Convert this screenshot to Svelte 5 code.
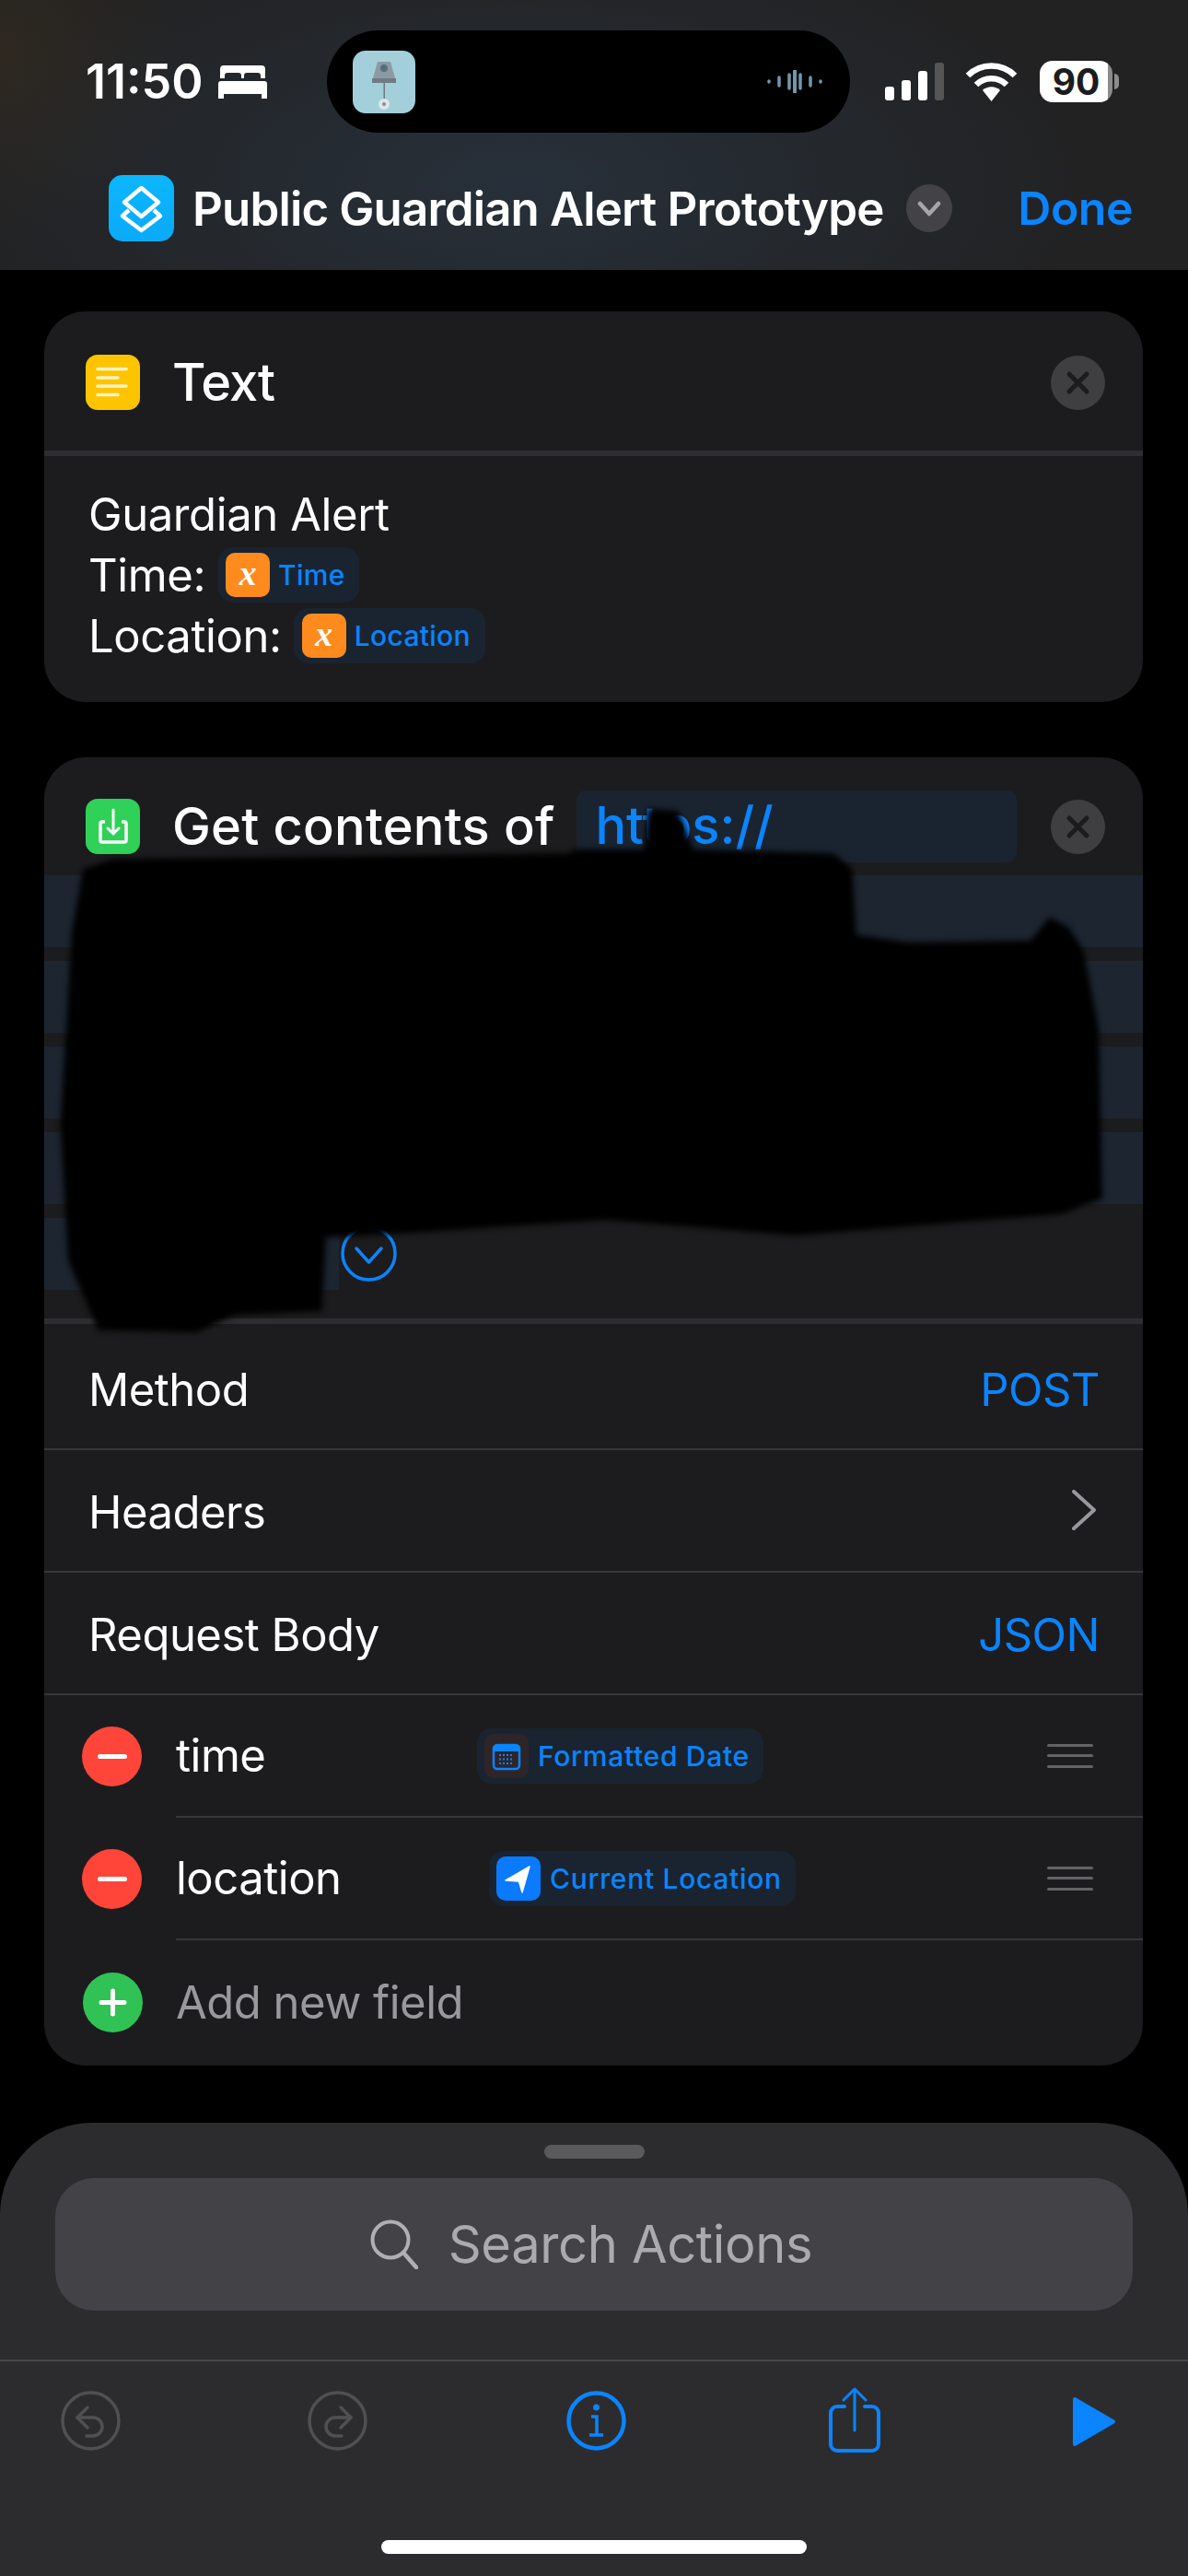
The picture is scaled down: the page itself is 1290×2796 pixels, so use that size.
<script>
  const stripes = [0, 1, 2, 3, 4];
  const fields = [
    { name: 'time', pill: 'Formatted Date', kind: 'date', offset: 327 },
    { name: 'location', pill: 'Current Location', kind: 'loc', offset: 340 }
  ];
</script>

<div class="page">
  <header class="header">
    <div class="status">
      <span class="time">11:50</span>
      <svg class="bed" viewBox="0 0 53 36" width="53" height="36" aria-hidden="true">
        <path fill="#fff" d="M6 0h41a4 4 0 0 1 4 4v10h-5v-3a3 3 0 0 0-3-3H31a3 3 0 0 0-3 3v3h-3v-3a3 3 0 0 0-3-3H10a3 3 0 0 0-3 3v3H2V4a4 4 0 0 1 4-4z"/>
        <path fill="#fff" d="M3 17h47a3 3 0 0 1 3 3v11H0V20a3 3 0 0 1 3-3z"/>
        <rect fill="#fff" x="0" y="31" width="6" height="5"/><rect fill="#fff" x="47" y="31" width="6" height="5"/>
      </svg>
      <div class="island">
        <div class="thumb">
          <svg viewBox="0 0 68 68" width="68" height="68" aria-hidden="true">
            <path fill="#8b9aa3" d="M27 12h14l5 18H22z"/><circle cx="34" cy="19" r="4" fill="#54707f"/>
            <rect x="21" y="30" width="26" height="5" fill="#6d7b84"/>
            <rect x="33.5" y="35" width="1.5" height="20" fill="#6d7b84"/>
            <circle cx="34" cy="58" r="6" fill="#dfe6e8"/><circle cx="34" cy="58" r="2" fill="#7d8d96"/>
          </svg>
        </div>
        <svg class="wave" viewBox="0 0 60 25" width="60" height="25" aria-hidden="true">
          <g stroke="#6f98a8" stroke-width="3.5" stroke-linecap="round">
            <path d="M2 12v1M13 8v9M24 5v15"/><path d="M30 1v23" stroke-width="4"/><path d="M36 5v15M47 8v9M58 12v1"/>
          </g>
        </svg>
      </div>
      <svg class="signal" viewBox="0 0 65 41" width="65" height="41" aria-hidden="true">
        <rect x="0" y="26" width="10" height="15" rx="3" fill="#fff"/>
        <rect x="18" y="19" width="10" height="22" rx="3" fill="#fff"/>
        <rect x="36" y="9" width="10" height="32" rx="3" fill="#fff"/>
        <rect x="54" y="0" width="10" height="41" rx="3" fill="#555"/>
      </svg>
      <svg class="wifi" viewBox="0 0 57 42" width="57" height="42" aria-hidden="true">
        <g fill="none" stroke="#fff" stroke-width="6.5">
          <path d="M3 14C17 0 40 0 54 14"/><path d="M12 24c9-9 24-9 33 0"/>
        </g>
        <path fill="#fff" d="M19 30c5-5 14-5 19 0L28.500 42z"/>
      </svg>
      <div class="battery"><span>90</span></div>
    </div>
    <div class="nav">
      <div class="app-icon">
        <svg viewBox="0 0 71 72" width="71" height="72" aria-hidden="true">
          <g fill="none" stroke="#fff" stroke-width="4.500" stroke-linejoin="round">
            <path d="M22 38 15 44.500 35.500 60 56 44.500 49 38"/>
            <path d="M35.500 14 54 29.500 35.500 45 17 29.500z"/>
          </g>
        </svg>
      </div>
      <span class="nav-title">Public Guardian Alert Prototype</span>
      <span class="nav-chev">
        <svg viewBox="0 0 50 52" width="50" height="52" aria-hidden="true"><path d="M15 21l10 11 10-11" fill="none" stroke="#a5a5aa" stroke-width="4.500" stroke-linecap="round" stroke-linejoin="round"/></svg>
      </span>
      <span class="done">Done</span>
    </div>
  </header>

  <main class="main">
    <section class="card card-text">
      <div class="card-head">
        <div class="act-icon yellow">
          <svg viewBox="0 0 59 60" width="59" height="60" aria-hidden="true">
            <g stroke="#fff4c4" stroke-width="3.500" stroke-linecap="round">
              <path d="M13 15.500h31M13 25h22M13 34h31M13 43.500h22"/>
            </g>
          </svg>
        </div>
        <span class="card-title">Text</span>
        <span class="close">
          <svg viewBox="0 0 59 59" width="59" height="59" aria-hidden="true"><path d="M20 20l19 19M39 20 20 39" stroke="#1c1c1e" stroke-width="5" stroke-linecap="round"/></svg>
        </span>
      </div>
      <div class="divider"></div>
      <div class="body">
        <div class="line">Guardian Alert</div>
        <div class="line">Time:<span class="pill p-time"><span class="var">x</span><span class="pill-text">Time</span></span></div>
        <div class="line">Location:<span class="pill p-loc"><span class="var">x</span><span class="pill-text">Location</span></span></div>
      </div>
    </section>

    <section class="card card-get">
      <div class="card-head head-get">
        <div class="act-icon green">
          <svg viewBox="0 0 59 60" width="59" height="60" aria-hidden="true">
            <path d="M21 25h-3a2 2 0 0 0-2 2v18a2 2 0 0 0 2 2h24a2 2 0 0 0 2-2V27a2 2 0 0 0-2-2h-3" fill="none" stroke="#fff" stroke-width="3.500" stroke-linejoin="round"/>
            <path d="M30 12v26M24 32l6 6 6-6" fill="none" stroke="#fff" stroke-width="3" stroke-linecap="round" stroke-linejoin="round"/>
          </svg>
        </div>
        <span class="card-title get-title">Get contents of</span>
        <div class="url"><span>https://</span></div>
        <span class="close">
          <svg viewBox="0 0 59 59" width="59" height="59" aria-hidden="true"><path d="M20 20l19 19M39 20 20 39" stroke="#1c1c1e" stroke-width="5" stroke-linecap="round"/></svg>
        </span>
      </div>
      <div class="stripes">
        {#each stripes as s}
          <div class="stripe" class:short={s === 4}>
            {#if s === 4}
              <svg class="expand" viewBox="0 0 61 61" width="61" height="61" aria-hidden="true">
                <circle cx="30.500" cy="30.500" r="28.500" fill="none" stroke="#0a84ff" stroke-width="3.500"/>
                <path d="M17 25l13.500 15L44 25" fill="none" stroke="#0a84ff" stroke-width="3.500" stroke-linecap="round" stroke-linejoin="round"/>
              </svg>
            {/if}
          </div>
        {/each}
      </div>
      <div class="divider div-get"></div>
      <div class="row"><span>Method</span><span class="val">POST</span></div>
      <div class="row"><span>Headers</span>
        <svg class="chev" viewBox="0 0 26 44" width="26" height="44" aria-hidden="true"><path d="M2 2l22 20L2 42" fill="none" stroke="#98989d" stroke-width="4" stroke-linecap="round" stroke-linejoin="round"/></svg>
      </div>
      <div class="row"><span>Request Body</span><span class="val">JSON</span></div>
      {#each fields as f}
        <div class="field">
          <span class="round red"><span class="minus"></span></span>
          <div class="field-main">
            <span class="field-name">{f.name}</span>
            <span class="pill field-pill" style="left: {f.offset}px">
              {#if f.kind === 'date'}
                <span class="pico date">
                  <svg viewBox="0 0 48 49" width="48" height="49" aria-hidden="true">
                    <rect x="10" y="12" width="28" height="26" rx="4" fill="none" stroke="#0a84ff" stroke-width="2.500"/>
                    <path d="M10 15a3 3 0 0 1 3-3h22a3 3 0 0 1 3 3v4H10z" fill="#0a84ff"/>
                    <path d="M16 23h16M16 27.500h16M16 32h16" stroke="#0a84ff" stroke-width="2" stroke-dasharray="2 2"/>
                  </svg>
                </span>
              {:else}
                <span class="pico locn">
                  <svg viewBox="0 0 48 49" width="48" height="49" aria-hidden="true"><path d="M10 26 36 11 28 39 24.500 27z" fill="#fff" stroke="#fff" stroke-width="1.500" stroke-linejoin="round"/></svg>
                </span>
              {/if}
              <span class="pill-text">{f.pill}</span>
            </span>
            <span class="grip"><i></i><i></i><i></i></span>
          </div>
        </div>
      {/each}
      <div class="field add">
        <span class="round grn">
          <svg viewBox="0 0 65 65" width="65" height="65" aria-hidden="true"><path d="M32.500 20v25M20 32.500h25" stroke="#fff" stroke-width="5" stroke-linecap="round"/></svg>
        </span>
        <div class="field-main none"><span class="field-name placeholder">Add new field</span></div>
      </div>
    </section>
  </main>

  <section class="sheet">
    <div class="handle"></div>
    <div class="search">
      <svg viewBox="0 0 52 54" width="52" height="54" aria-hidden="true">
        <circle cx="22" cy="22" r="19.500" fill="none" stroke="#b0b0b4" stroke-width="4"/>
        <path d="M36 36l14 16" stroke="#b0b0b4" stroke-width="4.500" stroke-linecap="round"/>
      </svg>
      <span>Search Actions</span>
    </div>
    <div class="toolbar">
      <svg class="t1" viewBox="0 0 65 65" width="65" height="65" aria-hidden="true">
        <g fill="none" stroke="#505052" stroke-width="3.500" stroke-linecap="round" stroke-linejoin="round">
          <circle cx="32.500" cy="32.500" r="30.500"/>
          <path d="M29 18 18 29l11 11"/><path d="M18 29h17a10 10 0 0 1 0 20h-7"/>
        </g>
      </svg>
      <svg class="t2" viewBox="0 0 65 65" width="65" height="65" aria-hidden="true">
        <g fill="none" stroke="#505052" stroke-width="3.500" stroke-linecap="round" stroke-linejoin="round">
          <circle cx="32.500" cy="32.500" r="30.500"/>
          <path d="M36 18l11 11-11 11"/><path d="M47 29H30a10 10 0 0 0 0 20h7"/>
        </g>
      </svg>
      <svg class="t3" viewBox="0 0 65 65" width="65" height="65" aria-hidden="true">
        <circle cx="32.500" cy="32.500" r="30" fill="none" stroke="#0a84ff" stroke-width="4.500"/>
        <circle cx="32.500" cy="18" r="3.500" fill="#0a84ff"/>
        <path d="M27 28h6v20M25 48h15" fill="none" stroke="#0a84ff" stroke-width="3.500"/>
      </svg>
      <svg class="t4" viewBox="0 0 56 72" width="56" height="72" aria-hidden="true">
        <g fill="none" stroke="#0a84ff" stroke-linecap="round" stroke-linejoin="round">
          <path d="M17 22H9a7 7 0 0 0-7 7v34a7 7 0 0 0 7 7h38a7 7 0 0 0 7-7V29a7 7 0 0 0-7-7h-8" stroke-width="4"/>
          <path d="M28 48V3M16 15 28 3l12 12" stroke-width="3"/>
        </g>
      </svg>
      <svg class="t5" viewBox="0 0 48 55" width="48" height="55" aria-hidden="true">
        <path d="M3 3 45 27.500 3 52z" fill="#0a84ff" stroke="#0a84ff" stroke-width="4" stroke-linejoin="round"/>
      </svg>
    </div>
    <div class="home"></div>
  </section>

  <svg class="redact" viewBox="0 0 1568 1568" preserveAspectRatio="none" aria-hidden="true">
    <path fill="#000" d="M110 340 150 315 750 300 760 290 850 290 855 185 895 190 915 290 1100 300 1125 340 1130 510 1200 530 1360 525 1385 465 1410 490 1430 550 1450 750 1455 1190 1400 1230 1050 1285 800 1245 530 1280 430 1290 425 1480 310 1490 260 1535 130 1530 90 1350 80 1000 95 500z"/>
  </svg>
</div>

<style>
  :global(body) {
    margin: 0;
    background: #000;
  }
  .page {
    position: relative;
    width: 1290px;
    height: 2796px;
    overflow: hidden;
    background: #000;
    color: #fff;
    font-family: Inter, "Liberation Sans", sans-serif;
  }
  .header {
    height: 293px;
    box-sizing: border-box;
    padding-top: 33px;
    background:
      radial-gradient(ellipse 620px 280px at 560px 200px, #27303a 0%, rgba(39, 48, 58, 0) 100%),
      radial-gradient(ellipse 200px 200px at 0 60px, #2e2820 0%, rgba(46, 40, 32, 0) 100%),
      #222223;
  }
  .status {
    display: flex;
    align-items: center;
    height: 111px;
    padding-left: 93px;
  }
  .time {
    width: 144px;
    font-size: 52px;
    font-weight: 600;
  }
  .bed {
    flex: none;
  }
  .island {
    box-sizing: border-box;
    flex: none;
    display: flex;
    align-items: center;
    justify-content: space-between;
    width: 568px;
    height: 111px;
    margin-left: 65px;
    padding: 0 30px 0 28px;
    border-radius: 56px;
    background: #000;
  }
  .thumb {
    width: 68px;
    height: 68px;
    border-radius: 14px;
    background: #a3cfdb;
  }
  .thumb svg,
  .app-icon svg,
  .act-icon svg,
  .close svg,
  .nav-chev svg,
  .pico svg,
  .round svg {
    display: block;
  }
  .signal {
    flex: none;
    margin-left: 38px;
  }
  .wifi {
    flex: none;
    margin-left: 22px;
  }
  .battery {
    position: relative;
    flex: none;
    width: 79px;
    height: 45px;
    margin-left: 24px;
    border-radius: 14px;
    background: linear-gradient(to right, #fff 94%, #8c8c8c 94%);
    color: #1c1c1e;
    font-size: 39px;
    font-weight: 700;
    line-height: 45px;
    text-align: center;
  }
  .battery::after {
    content: "";
    position: absolute;
    left: 81px;
    top: 14px;
    width: 5px;
    height: 17px;
    border-radius: 0 5px 5px 0;
    background: #8c8c8c;
  }
  .nav {
    display: flex;
    align-items: center;
    height: 72px;
    margin-top: 46px;
    padding: 0 60px 0 118px;
  }
  .app-icon {
    flex: none;
    width: 71px;
    height: 72px;
    border-radius: 15px;
    background: linear-gradient(#0cb6ff, #0aaaf8);
  }
  .nav-title {
    margin-left: 20px;
    font-size: 51px;
    font-weight: 600;
    letter-spacing: -0.85px;
    white-space: nowrap;
  }
  .nav-chev {
    flex: none;
    width: 50px;
    height: 52px;
    margin-left: 24px;
    border-radius: 50%;
    background: #424247;
  }
  .done {
    margin-left: auto;
    color: #0a84ff;
    font-size: 50px;
    font-weight: 600;
    letter-spacing: -0.5px;
  }
  .main {
    display: flex;
    flex-direction: column;
    gap: 60px;
    padding: 45px 49px 0 48px;
  }
  .card {
    overflow: hidden;
    border-radius: 45px;
    background: #1c1c1e;
  }
  .card-text {
    height: 424px;
  }
  .card-get {
    height: 1420px;
  }
  .card-head {
    display: flex;
    align-items: center;
    box-sizing: border-box;
    height: 151px;
    padding: 3px 41px 0 45px;
  }
  .head-get {
    height: 128px;
    padding-top: 22px;
  }
  .act-icon {
    flex: none;
    width: 59px;
    height: 60px;
    border-radius: 13px;
  }
  .yellow {
    background: #ffc400;
  }
  .green {
    background: #30d158;
  }
  .card-title {
    margin-left: 35px;
    font-size: 56px;
    font-weight: 500;
    letter-spacing: -1px;
  }
  .get-title {
    letter-spacing: 0.2px;
    white-space: nowrap;
  }
  .close {
    flex: none;
    width: 59px;
    height: 59px;
    margin-left: auto;
    border-radius: 50%;
    background: #3f3f42;
  }
  .url {
    box-sizing: border-box;
    width: 478px;
    height: 78px;
    margin-left: 24px;
    padding-left: 20px;
    border-radius: 10px;
    background: #1a2430;
    color: #0a84ff;
    font-size: 56px;
    font-weight: 500;
    line-height: 76px;
  }
  .divider {
    height: 6px;
    background: #2e2e32;
  }
  .body {
    padding: 30px 48px;
  }
  .line {
    display: flex;
    align-items: center;
    height: 66px;
    font-size: 49px;
    letter-spacing: -0.4px;
  }
  .pill {
    display: inline-flex;
    align-items: center;
    box-sizing: border-box;
    height: 60px;
    border-radius: 16px;
    background: #1a2430;
    color: #0a84ff;
    font-size: 30px;
    font-weight: 500;
    letter-spacing: 0.3px;
  }
  .p-time {
    margin-left: 14px;
    padding: 0 15px 0 8px;
  }
  .p-loc {
    margin-left: 13px;
    padding: 0 16px 0 9px;
  }
  .var {
    display: flex;
    align-items: center;
    justify-content: center;
    box-sizing: border-box;
    width: 48px;
    height: 48px;
    margin-right: 9px;
    padding-bottom: 5px;
    border-radius: 10px;
    background: #ff8a1e;
    color: #fff;
    font-family: "Liberation Serif", serif;
    font-size: 38px;
    font-style: italic;
    font-weight: 700;
    line-height: 40px;
  }
  .stripes {
    display: flex;
    flex-direction: column;
    gap: 15.500px;
    height: 450px;
  }
  .stripe {
    display: flex;
    align-items: center;
    height: 77.500px;
    padding-left: 322px;
    background: #1c2530;
  }
  .stripe.short {
    background: linear-gradient(to right, #1c2530 320px, transparent 320px);
  }
  .expand {
    flex: none;
  }
  .div-get {
    margin-top: 31px;
    margin-bottom: 3.500px;
  }
  .row {
    display: flex;
    align-items: center;
    justify-content: space-between;
    box-sizing: border-box;
    height: 133.200px;
    padding: 5px 47px 0 48px;
    border-bottom: 2px solid #38383a;
    font-size: 49px;
    letter-spacing: -0.5px;
  }
  .val {
    color: #0a84ff;
  }
  .chev {
    flex: none;
    margin-right: 4px;
    margin-top: -5px;
  }
  .field {
    display: flex;
    align-items: stretch;
    height: 133.200px;
  }
  .round {
    flex: none;
    display: flex;
    align-items: center;
    justify-content: center;
    align-self: center;
    width: 65px;
    height: 65px;
    margin-left: 41px;
    border-radius: 50%;
  }
  .red {
    background: #ff453a;
  }
  .grn {
    margin-left: 42px;
    background: #30c254;
  }
  .minus {
    width: 32px;
    height: 5px;
    border-radius: 3px;
    background: #fff;
  }
  .field-main {
    position: relative;
    flex: 1;
    display: flex;
    align-items: center;
    margin-left: 37px;
    border-bottom: 2px solid #38383a;
  }
  .add .field-main {
    margin-left: 36px;
  }
  .field-main.none {
    border-bottom: 0;
  }
  .field-name {
    font-size: 49px;
    letter-spacing: -0.5px;
  }
  .placeholder {
    color: #98989d;
  }
  .field-pill {
    position: absolute;
    top: 36px;
    padding: 0 15px 0 8px;
    letter-spacing: 0.7px;
  }
  .pico {
    flex: none;
    width: 48px;
    height: 48px;
    margin-right: 10px;
    border-radius: 10px;
  }
  .date {
    background: #2e2529;
  }
  .locn {
    background: #0a7aff;
  }
  .grip {
    display: flex;
    flex-direction: column;
    gap: 8.500px;
    width: 50px;
    margin-left: auto;
    margin-right: 54px;
  }
  .grip i {
    display: block;
    height: 3px;
    border-radius: 2px;
    background: #636366;
  }
  .sheet {
    position: absolute;
    left: 0;
    right: 0;
    bottom: 0;
    height: 492px;
    border-radius: 100px 100px 0 0;
    background: #2c2c2e;
  }
  .handle {
    width: 109px;
    height: 15px;
    margin: 24px auto 0;
    border-radius: 8px;
    background: #5a5a5c;
  }
  .search {
    display: flex;
    align-items: center;
    justify-content: center;
    box-sizing: border-box;
    gap: 33px;
    height: 144px;
    margin: 21px 60px 0;
    padding-right: 6px;
    border-radius: 42px;
    background: #434347;
    color: #ababaf;
    font-size: 56px;
    letter-spacing: -0.35px;
  }
  .toolbar {
    position: relative;
    height: 120px;
    margin-top: 53px;
    border-top: 2px solid #48484a;
  }
  .toolbar svg {
    position: absolute;
  }
  .t1 {
    left: 66px;
    top: 32px;
  }
  .t2 {
    left: 334px;
    top: 32px;
  }
  .t3 {
    left: 615px;
    top: 32px;
  }
  .t4 {
    left: 900px;
    top: 27px;
  }
  .t5 {
    left: 1164px;
    top: 38px;
  }
  .home {
    position: absolute;
    left: 414px;
    top: 453px;
    width: 462px;
    height: 15px;
    border-radius: 8px;
    background: #fff;
  }
  .redact {
    position: absolute;
    left: 0;
    top: 800px;
    width: 1290px;
    height: 660px;
    filter: blur(3px);
  }
</style>
